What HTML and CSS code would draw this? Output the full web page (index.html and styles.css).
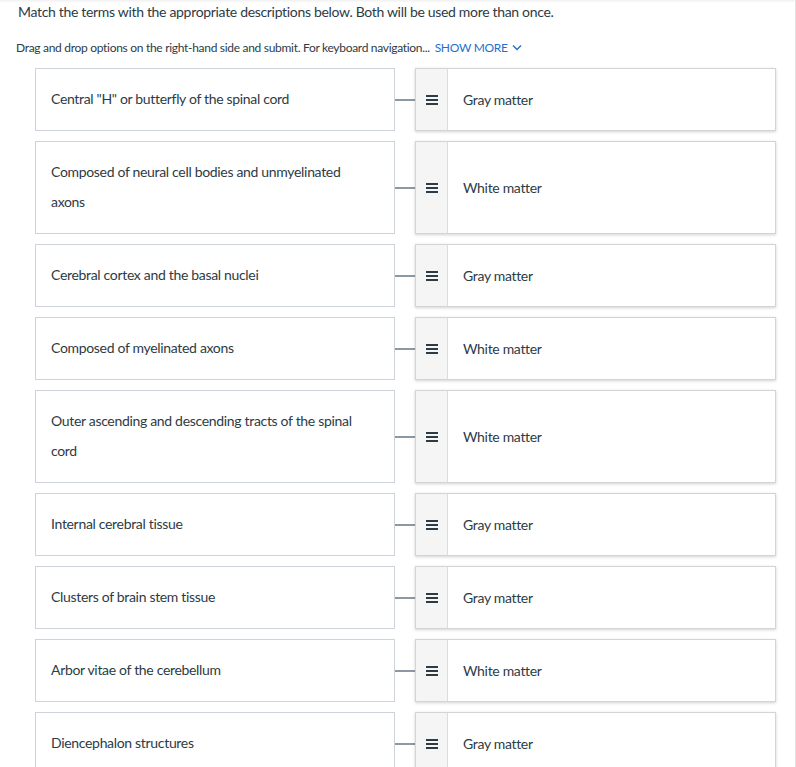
FILE: index.html
```html
<!DOCTYPE html>
<html lang="en">
<head>
    <meta charset="UTF-8">
    <meta name="viewport" content="width=device-width, initial-scale=1.0">
    <title>Matching</title>
    <link rel="stylesheet" href="styles.css">
</head>
<body>
    <div class="page">
        <p class="prompt">Match the terms with the appropriate descriptions below. Both will be used more than once.</p>
        <p class="hint">Drag and drop options on the right-hand side and submit. For keyboard navigation... <a class="more" href="#">SHOW MORE <svg width="10" height="7" viewBox="0 0 10 7"><path d="M1 1.5l4 4 4-4" fill="none" stroke="currentColor" stroke-width="1.4"/></svg></a></p>

        <div class="pairs">
            <div class="pair">
                <div class="term">Central "H" or butterfly of the spinal cord</div>
                <div class="link"></div>
                <div class="answer"><span class="handle"><i></i></span><span class="label">Gray matter</span></div>
            </div>
            <div class="pair">
                <div class="term">Composed of neural cell bodies and unmyelinated axons</div>
                <div class="link"></div>
                <div class="answer"><span class="handle"><i></i></span><span class="label">White matter</span></div>
            </div>
            <div class="pair">
                <div class="term">Cerebral cortex and the basal nuclei</div>
                <div class="link"></div>
                <div class="answer"><span class="handle"><i></i></span><span class="label">Gray matter</span></div>
            </div>
            <div class="pair">
                <div class="term">Composed of myelinated axons</div>
                <div class="link"></div>
                <div class="answer"><span class="handle"><i></i></span><span class="label">White matter</span></div>
            </div>
            <div class="pair">
                <div class="term">Outer ascending and descending tracts of the spinal cord</div>
                <div class="link"></div>
                <div class="answer"><span class="handle"><i></i></span><span class="label">White matter</span></div>
            </div>
            <div class="pair">
                <div class="term">Internal cerebral tissue</div>
                <div class="link"></div>
                <div class="answer"><span class="handle"><i></i></span><span class="label">Gray matter</span></div>
            </div>
            <div class="pair">
                <div class="term">Clusters of brain stem tissue</div>
                <div class="link"></div>
                <div class="answer"><span class="handle"><i></i></span><span class="label">Gray matter</span></div>
            </div>
            <div class="pair">
                <div class="term">Arbor vitae of the cerebellum</div>
                <div class="link"></div>
                <div class="answer"><span class="handle"><i></i></span><span class="label">White matter</span></div>
            </div>
            <div class="pair">
                <div class="term">Diencephalon structures</div>
                <div class="link"></div>
                <div class="answer"><span class="handle"><i></i></span><span class="label">Gray matter</span></div>
            </div>
        </div>
    </div>
</body>
</html>
```

FILE: styles.css
```css
body {
    margin: 0;
    font-family: 'Lato', 'Open Sans', sans-serif;
    letter-spacing: -0.32px;
    color: #2d3b45;
    background: #fff;
}

.page {
    width: 795px;
    min-height: 767px;
    border-right: 1px solid #e3e3e3;
    box-shadow: inset 0 3px 3px -2px rgba(0, 0, 0, 0.08);
}

.prompt {
    margin: 0;
    padding: 2px 0 0 18px;
    font-size: 14px;
    line-height: 20px;
}

.hint {
    margin: 0;
    padding: 17px 0 0 16px;
    font-size: 12px;
    line-height: 18px;
    letter-spacing: -0.3px;
}

.more {
    color: #1f6fd0;
    text-decoration: none;
    margin-left: 2px;
}

.more svg {
    margin-left: 2px;
    vertical-align: 1px;
}

.pairs {
    display: flex;
    flex-direction: column;
    gap: 10px;
    padding: 11px 0 0 35px;
}

.pair {
    display: flex;
    align-items: stretch;
}

.term {
    width: 360px;
    box-sizing: border-box;
    border: 1px solid #cdd3d8;
    padding: 15px 40px 16px 15px;
    font-size: 14px;
    line-height: 30px;
}

.link {
    width: 20px;
    align-self: center;
    height: 2px;
    background: #8c99a5;
}

.answer {
    width: 361px;
    box-sizing: border-box;
    display: flex;
    border: 1px solid #d4d4d4;
    box-shadow: 0 1px 3px rgba(0, 0, 0, 0.18);
    background: #fff;
}

.handle {
    width: 31px;
    flex: none;
    background: #f5f5f5;
    border-right: 1px solid #dcdcdc;
    display: flex;
    align-items: center;
    justify-content: center;
}

.handle i {
    display: block;
    width: 12px;
    height: 2px;
    background: #2d3b45;
    box-shadow: 0 -4px 0 #2d3b45, 0 4px 0 #2d3b45;
}

.label {
    display: flex;
    align-items: center;
    padding-left: 15px;
    font-size: 14px;
}
```
